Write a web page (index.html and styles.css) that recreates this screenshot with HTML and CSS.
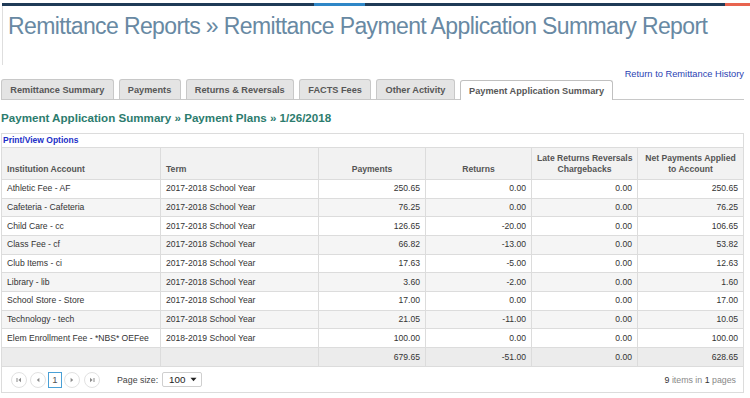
FILE: index.html
```html
<!DOCTYPE html>
<html>
<head>
<meta charset="utf-8">
<link rel="stylesheet" href="styles.css">
</head>
<body>
<div class="topbar">
  <span class="seg navy s1"></span><span class="seg blue s2"></span><span class="seg navy s3"></span><span class="seg orange s4"></span>
</div>
<header class="titlebox">
  <h1 class="title">Remittance Reports » Remittance Payment Application Summary Report</h1>
</header>
<main class="main">
  <div class="linkrow"><a class="return-link" href="#">Return to Remittance History</a></div>
  <nav class="tabs">
    <span class="tab">Remittance Summary</span>
    <span class="tab">Payments</span>
    <span class="tab">Returns &amp; Reversals</span>
    <span class="tab">FACTS Fees</span>
    <span class="tab">Other Activity</span>
    <span class="tab active">Payment Application Summary</span>
  </nav>
  <h2 class="heading">Payment Application Summary » Payment Plans » 1/26/2018</h2>
  <section class="grid">
    <div class="printrow"><a class="print-link" href="#">Print/View Options</a></div>
    <table class="data">
      <colgroup>
        <col class="c1"><col class="c2"><col class="c3"><col class="c4"><col class="c5"><col class="c6">
      </colgroup>
      <thead>
        <tr>
          <th class="left">Institution Account</th>
          <th class="left">Term</th>
          <th>Payments</th>
          <th>Returns</th>
          <th>Late Returns Reversals<br>Chargebacks</th>
          <th>Net Payments Applied<br>to Account</th>
        </tr>
      </thead>
      <tbody>
        <tr><td>Athletic Fee - AF</td><td>2017-2018 School Year</td><td class="num">250.65</td><td class="num">0.00</td><td class="num">0.00</td><td class="num">250.65</td></tr>
        <tr class="alt"><td>Cafeteria - Cafeteria</td><td>2017-2018 School Year</td><td class="num">76.25</td><td class="num">0.00</td><td class="num">0.00</td><td class="num">76.25</td></tr>
        <tr><td>Child Care - cc</td><td>2017-2018 School Year</td><td class="num">126.65</td><td class="num">-20.00</td><td class="num">0.00</td><td class="num">106.65</td></tr>
        <tr class="alt"><td>Class Fee - cf</td><td>2017-2018 School Year</td><td class="num">66.82</td><td class="num">-13.00</td><td class="num">0.00</td><td class="num">53.82</td></tr>
        <tr><td>Club Items - ci</td><td>2017-2018 School Year</td><td class="num">17.63</td><td class="num">-5.00</td><td class="num">0.00</td><td class="num">12.63</td></tr>
        <tr class="alt"><td>Library - lib</td><td>2017-2018 School Year</td><td class="num">3.60</td><td class="num">-2.00</td><td class="num">0.00</td><td class="num">1.60</td></tr>
        <tr><td>School Store - Store</td><td>2017-2018 School Year</td><td class="num">17.00</td><td class="num">0.00</td><td class="num">0.00</td><td class="num">17.00</td></tr>
        <tr class="alt"><td>Technology - tech</td><td>2017-2018 School Year</td><td class="num">21.05</td><td class="num">-11.00</td><td class="num">0.00</td><td class="num">10.05</td></tr>
        <tr><td>Elem Enrollment Fee - *NBS* OEFee</td><td>2018-2019 School Year</td><td class="num">100.00</td><td class="num">0.00</td><td class="num">0.00</td><td class="num">100.00</td></tr>
      </tbody>
      <tfoot>
        <tr><td></td><td></td><td class="num">679.65</td><td class="num">-51.00</td><td class="num">0.00</td><td class="num">628.65</td></tr>
      </tfoot>
    </table>
    <div class="pager">
      <span class="pbtn"><svg width="8" height="8" viewBox="0 0 8 8"><rect x="1.5" y="2" width="1" height="4" fill="#8a8a8a"/><path d="M6 1.8 L3.4 4 L6 6.2 Z" fill="#8a8a8a"/></svg></span>
      <span class="pbtn"><svg width="8" height="8" viewBox="0 0 8 8"><path d="M5.4 1.8 L2.8 4 L5.4 6.2 Z" fill="#8a8a8a"/></svg></span>
      <span class="pcur">1</span>
      <span class="pbtn"><svg width="8" height="8" viewBox="0 0 8 8"><path d="M2.6 1.8 L5.2 4 L2.6 6.2 Z" fill="#8a8a8a"/></svg></span>
      <span class="pbtn"><svg width="8" height="8" viewBox="0 0 8 8"><path d="M2 1.8 L4.6 4 L2 6.2 Z" fill="#8a8a8a"/><rect x="5.5" y="2" width="1" height="4" fill="#8a8a8a"/></svg></span>
      <span class="psize">Page size:</span>
      <span class="select"><span class="selval">100</span><svg class="caret" width="7" height="5" viewBox="0 0 7 5"><path d="M0.5 0.8 L6.5 0.8 L3.5 4.3 Z" fill="#222"/></svg></span>
      <span class="pinfo"><b>9</b> items in <b>1</b> pages</span>
    </div>
  </section>
</main>
</body>
</html>
```
FILE: styles.css
```css
* { box-sizing: border-box; }
html, body { margin: 0; padding: 0; background: #fff; }
body { font-family: "Liberation Sans", Arial, sans-serif; color: #333; width: 750px; height: 398px; overflow: hidden; }

.topbar { display: flex; height: 3px; margin: 3px 0 0 2px; }
.seg { display: block; height: 3px; }
.navy { background: #1f3b57; }
.blue { background: #2f87c7; }
.orange { background: #e8644f; }
.s1 { width: 312px; }
.s2 { width: 51px; }
.s3 { width: 360px; }
.s4 { flex: 1; }

.titlebox { margin-left: 2px; border-left: 1px solid #dedede; height: 59px; padding: 7px 0 0 5px; }
.title { margin: 0; font-weight: normal; font-size: 23px; letter-spacing: -0.62px; line-height: 26px; color: #6889a3; white-space: nowrap; }

.main { padding-left: 1px; width: 744px; }
.linkrow { height: 15px; padding-top: 4px; text-align: right; font-size: 9.3px; line-height: 11px; }
.return-link { color: #2b3fb3; text-decoration: none; }

.tabs { display: flex; align-items: flex-end; gap: 5px; height: 20px; border-bottom: 1px solid #c8c8c8; }
.tab { display: block; height: 20px; padding: 0 8.3px; font-size: 9.2px; font-weight: bold; line-height: 20px; color: #575757; background: #e4e4e4; border: 1px solid #c8c8c8; border-bottom: none; border-radius: 3px 3px 0 0; white-space: nowrap; }
.tab.active { background: #fff; height: 20px; margin-bottom: -1px; line-height: 20px; border-color: #c0c0c0; }

.heading { margin: 11px 0 8px; font-size: 11.6px; line-height: 14px; font-weight: bold; color: #2c7c6e; white-space: nowrap; }

.grid { width: 743px; border: 1px solid #dcdcdc; }
.printrow { height: 14px; border-bottom: 1px solid #dcdcdc; padding-left: 1px; font-size: 8.5px; line-height: 13px; }
.print-link { color: #2230c8; font-weight: bold; text-decoration: none; }

.data { width: 741px; table-layout: fixed; border-collapse: separate; border-spacing: 0; font-size: 8.6px; }
.c1 { width: 159px; }
.c2 { width: 158px; }
.c3 { width: 107px; }
.c4 { width: 106px; }
.c5 { width: 106px; }
.c6 { width: 105px; }
.data th, .data td { border-right: 1px solid #dcdcdc; border-bottom: 1px solid #dcdcdc; white-space: nowrap; overflow: hidden; }
.data th:last-child, .data td:last-child { border-right: none; }
.data th { height: 32px; padding: 0 5px 4px; vertical-align: bottom; text-align: center; font-weight: bold; color: #555; line-height: 11px; background: #f2f2f2; }
.data th.left { text-align: left; }
.data td { height: 18.67px; padding: 0 5px; line-height: 11px; vertical-align: middle; color: #333; background: #fff; }
.data tr.alt td { background: #f5f5f5; }
.data td.num { text-align: right; }
.data tfoot td { height: 19.3px; background: #ececec; }

.pager { display: flex; align-items: center; height: 25px; padding-left: 9px; font-size: 8.8px; color: #444; }
.pbtn { display: flex; align-items: center; justify-content: center; width: 16px; height: 16px; border: 1px solid #e2e2e2; border-radius: 50%; background: #fff; margin-right: 3px; }
.pcur { display: flex; align-items: center; justify-content: center; width: 14px; height: 16px; border: 1px solid #4aa0d6; margin: 0 1px 0 -1px; color: #555; font-size: 9.5px; }
.pcur + .pbtn { margin-left: 1px; margin-right: 4px; }
.psize { margin-left: 14px; color: #444; }
.select { display: flex; align-items: center; width: 40px; height: 15px; margin-left: 4px; border: 1px solid #cfcfcf; border-radius: 2px; padding: 0 4px 0 6px; font-size: 9.8px; color: #222; }
.selval { flex: 1; }
.caret { display: block; }
.pinfo { margin-left: auto; padding-right: 7px; color: #888; }
.pinfo b { font-weight: normal; color: #333; }
```
